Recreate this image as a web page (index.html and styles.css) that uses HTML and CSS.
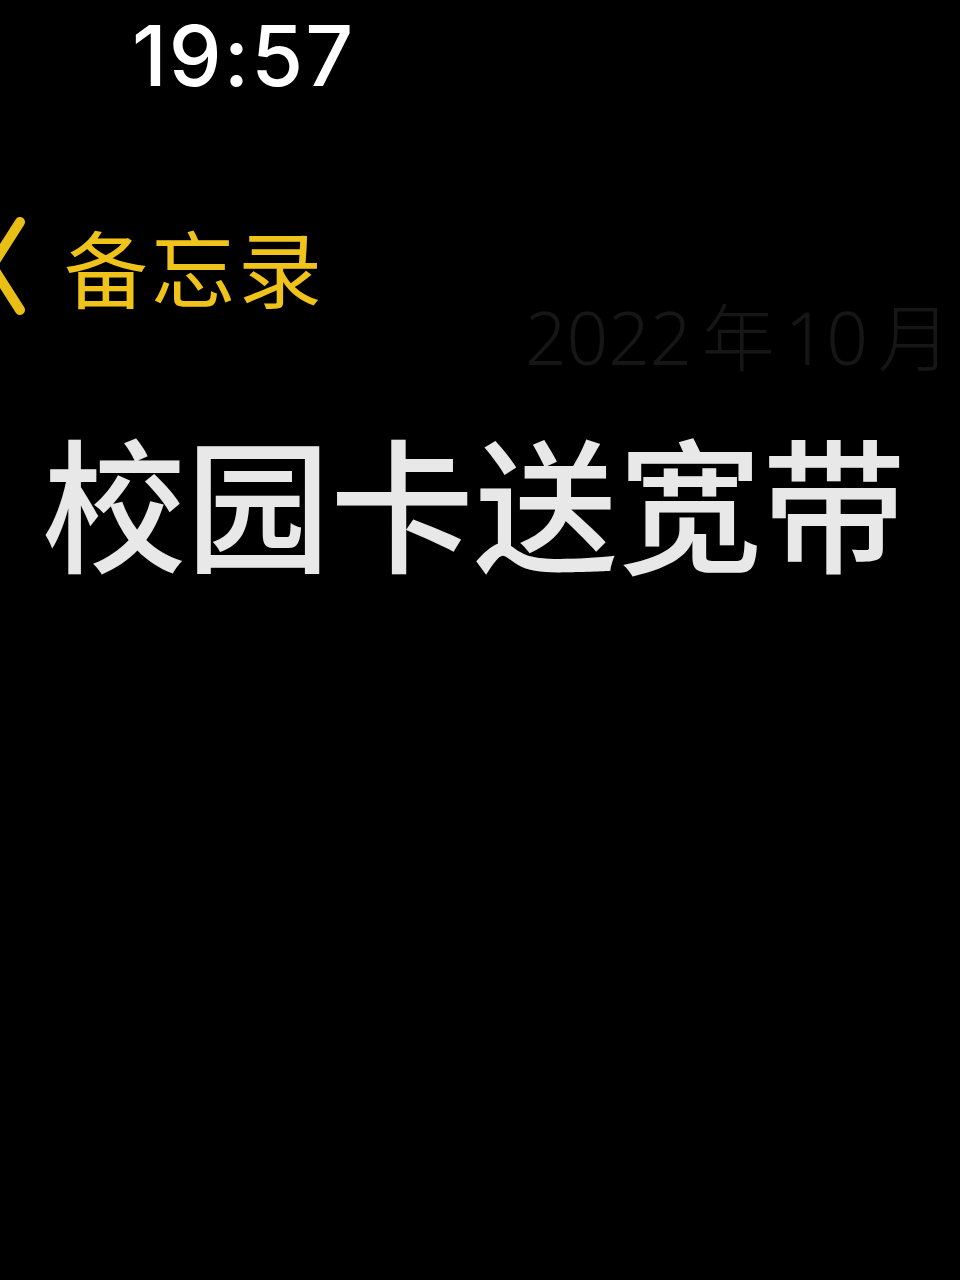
FILE: index.html
```html
<!DOCTYPE html>
<html lang="zh-CN">
<head>
<meta charset="utf-8">
<link rel="stylesheet" href="styles.css">
</head>
<body>
<div class="screen">
  <div class="status">
    <span class="time">19:57</span>
  </div>
  <div class="nav">
    <svg class="chev" viewBox="0 0 40 100" width="40" height="100">
      <path d="M34 6 L6 50 L34 94" fill="none" stroke="#e9bf16" stroke-width="10" stroke-linecap="round" stroke-linejoin="round"/>
    </svg>
    <span class="back">备忘录</span>
  </div>
  <div class="date">2022<span class="unit">年</span>10<span class="unit last">月</span></div>
  <h1 class="title">校园卡送宽带</h1>
</div>
</body>
</html>
```
FILE: styles.css
```css
html, body {
  margin: 0;
  padding: 0;
  background: #000;
}
.screen {
  width: 960px;
  height: 1280px;
  background: #000;
  overflow: hidden;
  display: flex;
  flex-direction: column;
}
.status {
  padding: 14px 0 0 132px;
  height: 100px;
  box-sizing: border-box;
}
.time {
  font-family: "Inter", "Liberation Sans", sans-serif;
  font-weight: 500;
  font-size: 84px;
  line-height: 1;
  color: #fff;
  letter-spacing: 2px;
}
.nav {
  display: flex;
  align-items: center;
  gap: 38px;
  margin-top: 116px;
  margin-left: -14px;
  height: 100px;
}
.chev {
  display: block;
  flex: none;
}
.back {
  font-family: "Noto Sans CJK SC", sans-serif;
  font-weight: 400;
  font-size: 84px;
  line-height: 1;
  color: #f0c31b;
  letter-spacing: 3px;
}
.date {
  font-family: "Noto Sans", "Noto Sans CJK SC", sans-serif;
  font-weight: 300;
  font-size: 73px;
  line-height: 1;
  color: #161616;
  text-align: right;
  padding-right: 9px;
  margin-top: -16px;
}
.unit {
  margin: 0 10px;
}
.unit.last {
  margin-right: 0;
}
.title {
  margin: 54px 0 0 42px;
  font-family: "Noto Sans CJK SC", sans-serif;
  font-weight: 500;
  font-size: 144px;
  line-height: 1;
  color: #e8e8e8;
  letter-spacing: 0;
  white-space: nowrap;
}
```
